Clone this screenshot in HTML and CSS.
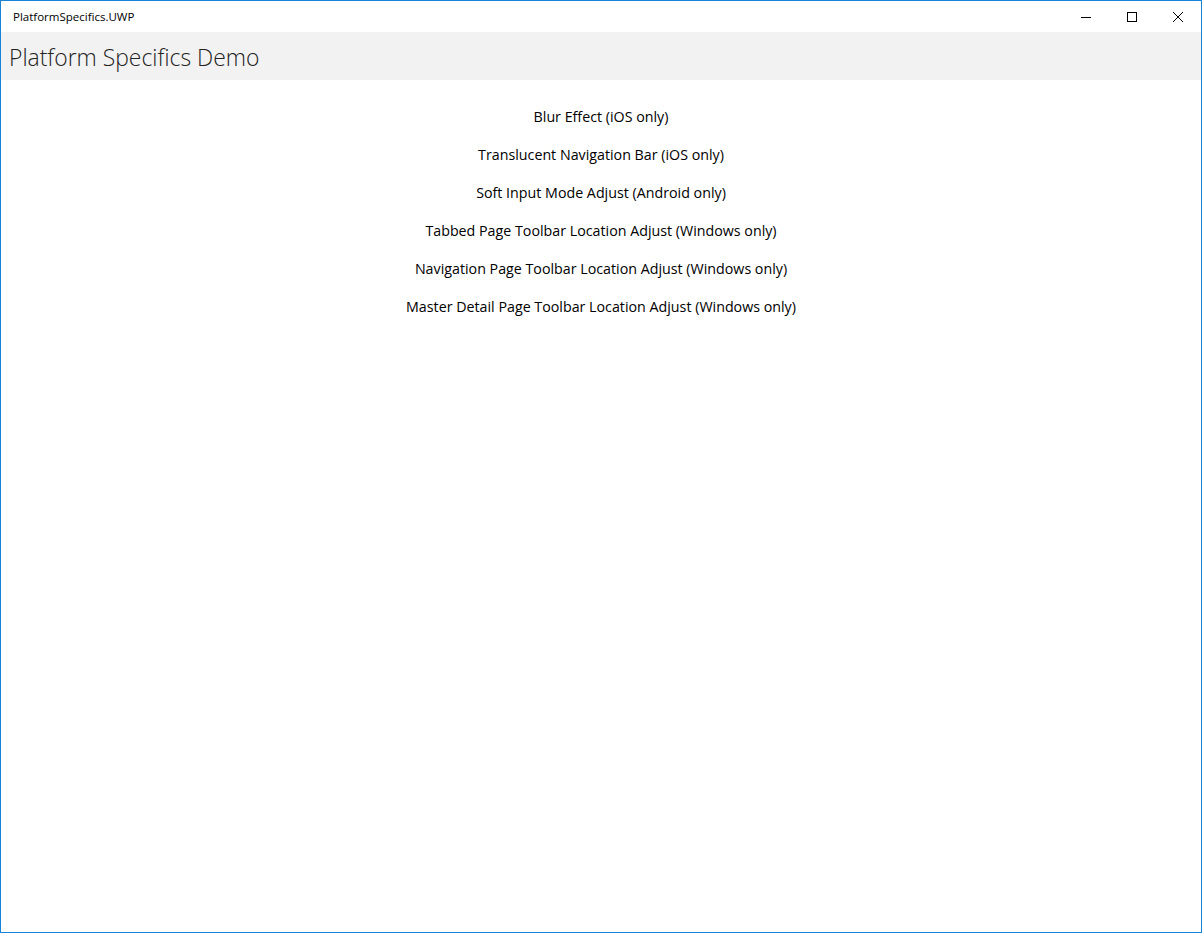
FILE: index.html
```html
<!DOCTYPE html>
<html>
<head>
<meta charset="utf-8">
<link rel="stylesheet" href="styles.css">
</head>
<body>
<div class="window">
  <div class="titlebar">
    <span class="app-title">PlatformSpecifics.UWP</span>
    <div class="caption-buttons">
      <div class="cap-btn">
        <svg width="10" height="10" viewBox="0 0 10 10"><path d="M0 5.5H10" stroke="#000" stroke-width="1"/></svg>
      </div>
      <div class="cap-btn">
        <svg width="10" height="10" viewBox="0 0 10 10"><rect x="0.5" y="0.5" width="9" height="9" fill="none" stroke="#000" stroke-width="1"/></svg>
      </div>
      <div class="cap-btn">
        <svg width="10" height="10" viewBox="0 0 10 10"><path d="M0 0L10 10M10 0L0 10" stroke="#000" stroke-width="1"/></svg>
      </div>
    </div>
  </div>
  <div class="appbar">
    <h1 class="page-title">Platform Specifics Demo</h1>
  </div>
  <div class="content">
    <div class="item">Blur Effect (iOS only)</div>
    <div class="item">Translucent Navigation Bar (iOS only)</div>
    <div class="item">Soft Input Mode Adjust (Android only)</div>
    <div class="item">Tabbed Page Toolbar Location Adjust (Windows only)</div>
    <div class="item">Navigation Page Toolbar Location Adjust (Windows only)</div>
    <div class="item">Master Detail Page Toolbar Location Adjust (Windows only)</div>
  </div>
</div>
</body>
</html>
```

FILE: styles.css
```css
html, body {
  margin: 0;
  padding: 0;
  background: #fff;
}
.window {
  width: 1202px;
  height: 933px;
  box-sizing: border-box;
  border: 1px solid #1883d7;
  display: flex;
  flex-direction: column;
  font-family: "Open Sans", "Noto Sans", sans-serif;
  color: #000;
}
.titlebar {
  height: 31px;
  display: flex;
  align-items: center;
  justify-content: space-between;
  background: #fff;
}
.app-title {
  font-size: 11.5px;
  padding-left: 12px;
}
.caption-buttons {
  display: flex;
  height: 31px;
}
.cap-btn {
  width: 46px;
  height: 31px;
  display: flex;
  align-items: center;
  justify-content: center;
}
.cap-btn svg { display: block; }
.appbar {
  height: 48px;
  background: #f2f2f2;
  display: flex;
  align-items: center;
}
.page-title {
  margin: 0;
  padding-left: 8px;
  padding-top: 2px;
  font-size: 22.9px;
  font-weight: 300;
  color: #222;
}
.content {
  display: flex;
  flex-direction: column;
  align-items: center;
  padding-top: 18px;
}
.item {
  height: 38px;
  line-height: 38px;
  font-size: 14.25px;
  text-align: center;
}
```
